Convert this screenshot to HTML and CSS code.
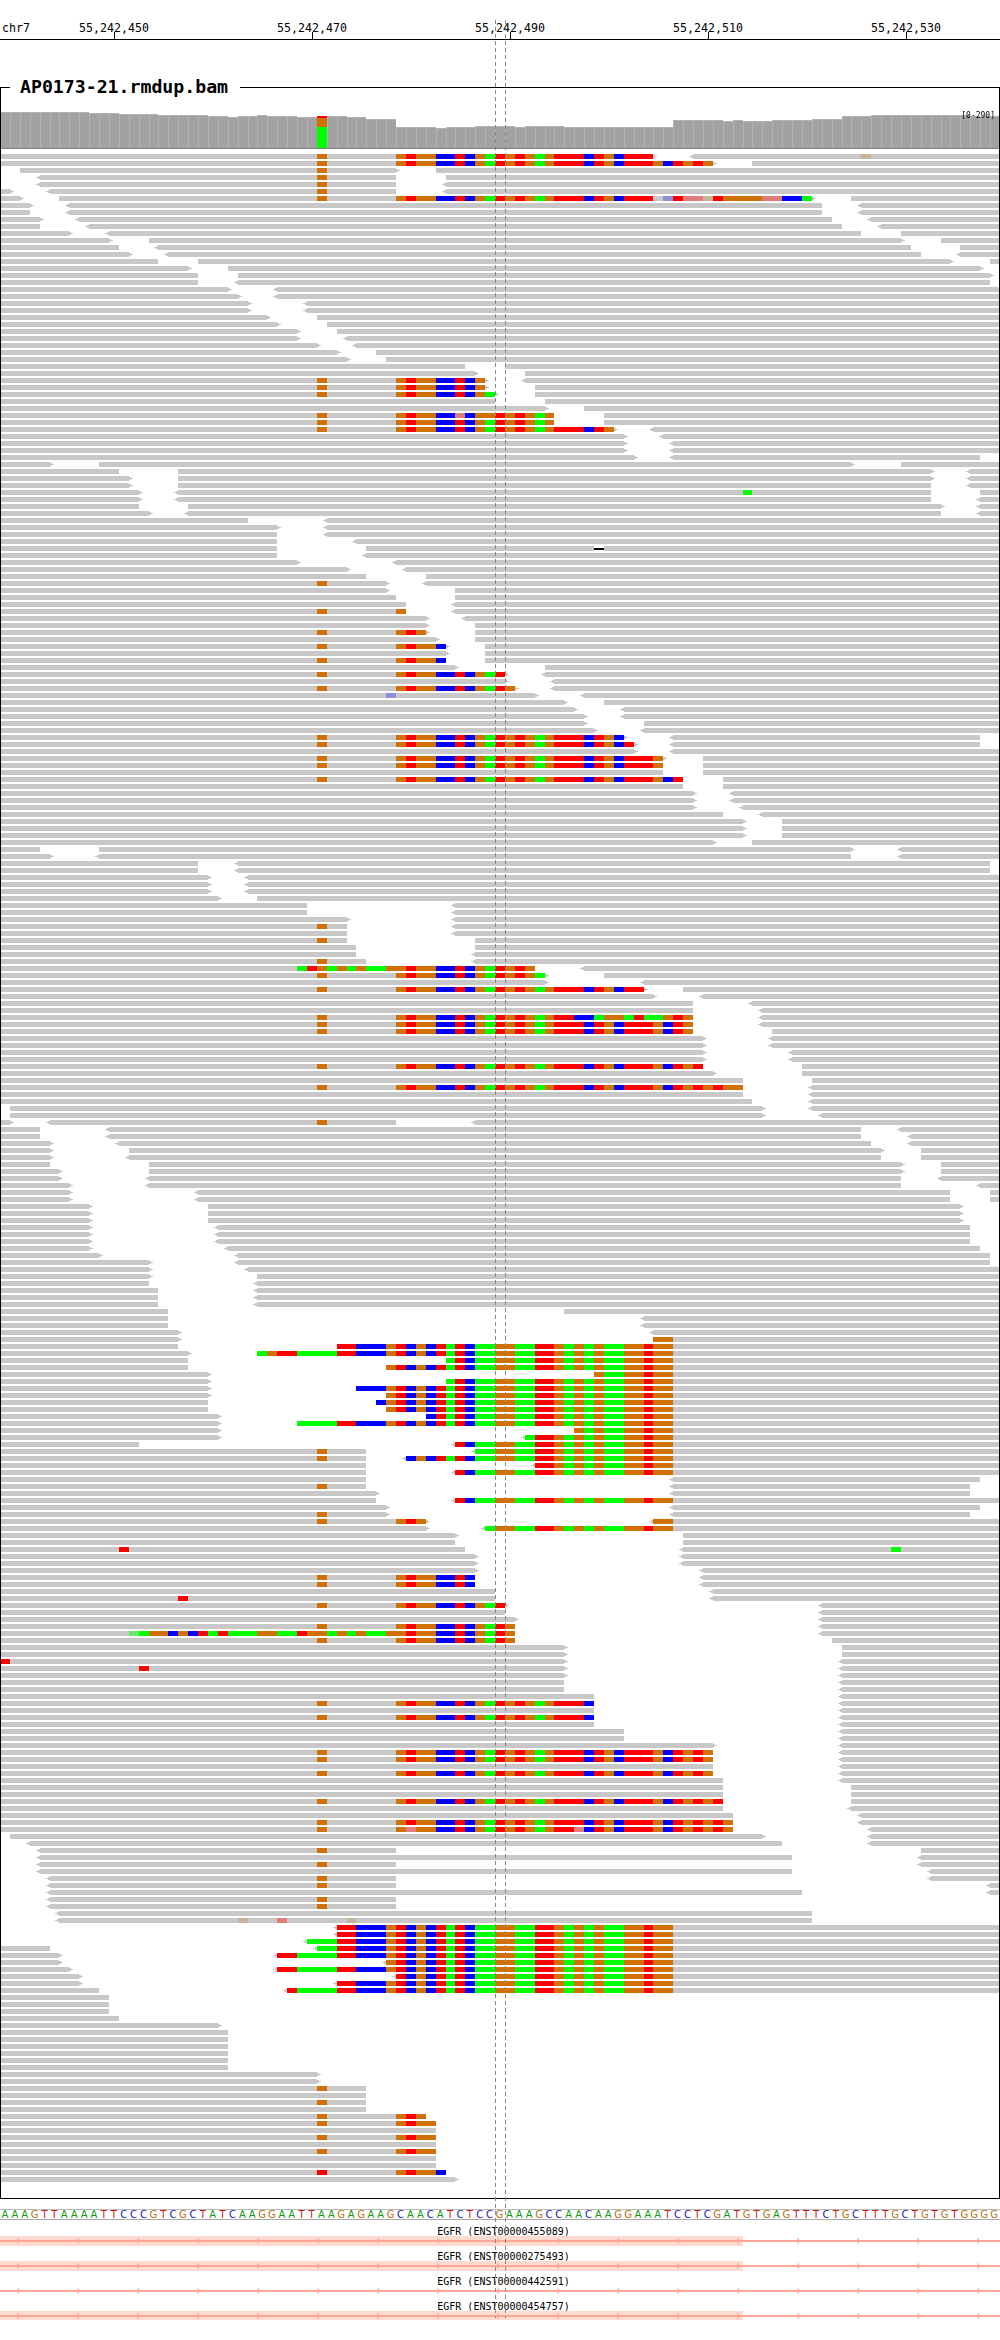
FILE: index.html
```html
<!DOCTYPE html>
<html lang="en">
<head>
  <meta charset="UTF-8">
  <title>AP0173-21.rmdup.bam</title>
  <meta name="viewport" content="width=device-width, initial-scale=1">
  <link rel="stylesheet" href="styles.css">
</head>
<body>
  <div class="ruler">
    <span class="chrom">chr7</span>
    <span class="tick">55,242,450</span>
    <span class="tick">55,242,470</span>
    <span class="tick">55,242,490</span>
    <span class="tick">55,242,510</span>
    <span class="tick">55,242,530</span>
  </div>
  <fieldset class="track">
    <legend>AP0173-21.rmdup.bam</legend>
    <span class="range">[0-290]</span>
    <canvas id="reads" width="998" height="2099"></canvas>
  </fieldset>
  <div class="sequence" id="sequence"></div>
  <div id="genes"></div>
  <div class="center-line left"></div>
  <div class="center-line right"></div>
  <script src="script.js"></script>
</body>
</html>
```

FILE: styles.css
```css
html, body {
  margin: 0;
  padding: 0;
  background: #fff;
}
body {
  position: relative;
  width: 1000px;
  height: 2340px;
  overflow: hidden;
  font-family: "DejaVu Sans Mono", monospace;
  color: #000;
}
.ruler {
  position: relative;
  display: flex;
  box-sizing: border-box;
  height: 40px;
  padding: 21px 0 0 15px;
  font-size: 11.6px;
  line-height: 14px;
  border-bottom: 1px solid #000;
  overflow: hidden;
}
.chrom {
  position: absolute;
  left: 2px;
  top: 21px;
}
.tick {
  position: relative;
  flex: 0 0 198px;
  text-align: center;
}
.tick::after {
  content: "";
  position: absolute;
  left: 99px;
  bottom: 0;
  width: 1px;
  height: 7px;
  background: #000;
}
.track {
  position: relative;
  box-sizing: border-box;
  width: 1000px;
  margin: 35px 0 0 0;
  padding: 0;
  border: 1px solid #000;
  min-width: 0;
}
.track legend {
  margin-left: 9px;
  padding: 0 12px 0 10px;
  font-size: 18.2px;
  font-weight: bold;
  line-height: 24px;
}
.track canvas {
  display: block;
}
.range {
  position: absolute;
  right: 4px;
  top: 12px;
  font-size: 8px;
  line-height: 10px;
}
.sequence {
  display: grid;
  grid-template-columns: repeat(101, 9.9px);
  box-sizing: border-box;
  height: 11px;
  margin-top: 10px;
  border-top: 1px solid #bbb;
  border-bottom: 1px solid #aaa;
  font-family: "DejaVu Sans", sans-serif;
  font-size: 10px;
  line-height: 9px;
  text-align: center;
}
.base-A { color: #109a10; }
.base-C { color: #2020b0; }
.base-G { color: #b87010; }
.base-T { color: #c81818; }
#genes {
  margin-top: 7px;
}
.gene {
  height: 25px;
}
.gene-label {
  font-size: 10px;
  line-height: 9px;
  text-align: center;
  padding-left: 7px;
}
.gene-track {
  display: block;
}
.center-line {
  position: absolute;
  top: 20px;
  width: 1px;
  height: 2298px;
  background: repeating-linear-gradient(to bottom, #888 0, #888 4px, transparent 4px, transparent 7px);
}
.center-line.left { left: 495px; }
.center-line.right { left: 505px; }
```

FILE: script.js
```js
const COLORS = {
  A: '#00ff00', C: '#0000ff', G: '#d17105', T: '#ff0000',
  p: '#e07c7c', n: '#c8b39b', l: '#8f8fdd', e: '#66e866'
};
const READ_GRAY = '#c8c8c8';

// the two soft-clipped consensus sequences, by column
const SEQ_A_START = 13;
const SEQ_A = 'AAGGCGCTATAAA' + 'GGAATGGAGAGAAG' + 'GTGGCCTCGATGTGAGTTTCTGCTTTGCTGTGTGG';
const SEQ_B_START = 26;
const SEQ_B = 'AGTTAAAATTCCCGTCGCTATCAAGGAATTGAGAGAAGGTGG';

const REFERENCE = 'AAAGTTAAAATTCCCGTCGCTATCAAGGAATTAAGAGAAGCAACATCTCCGAAAGCCAACAAGGAAATCCTCGATGTGAGTTTCTGCTTTGCTGTGTGGGG';

// top of each coverage bar: [columns, y]
const COVERAGE = [[9,112],[3,113],[4,114],[5,115],[2,116],[1,117],[2,116],[1,115],[3,116],[2,117],[3,116],[2,117],
  [3,119],[4,127],[1,128],[3,127],[4,126],[1,127],[4,126],[11,127],[5,120],[1,121],[1,120],[3,121],[4,120],[3,119],
  [3,116],[10,115],[3,116]];

// reads | mismatches. aN: col 32 + sequence A up to N, bN: sequence B from N
const ROWS = `0-66> <70-101|a66 n87
0-72> 76-101|a72
2-40> 44-101|G32
<4-40 45-101|G32
<4-40 <45-101|G32
0-1> <5-40 <45-101|G32
0-2> 6-82> 86-101|a66 l67 T68 p69 p70 n71 T72 G73 G74 G75 G76 p77 p78 C79 C80 A81
0-3> <7-83 <87-101
0-3 <7-83 <87-101
0-4> <8-84 <88-101
0-4 <9-85 <89-101
0-7> <11-87 91-101
0-11> 15-91> 95-101
0-12 <16-92 97-101
0-13> <17-93 <97-101
0-16 20-96> 100-101
0-19> 23-99>
0-20 24-100>
0-20 <24-100
0-23> <28-101
0-24> <28-101
0-25> <31-101
0-25> <31-101
0-27> 32-101
0-28> 33-101
0-30> 34-101
0-30> <35-101
0-32> <36-101
0-34> 38-101
0-35> 39-101
0-47 51-101
0-48> 53-101
0-49> <53-101|a49
0-49> 54-101|a49
0-50> 54-101|a50
0-50 55-101
0-55> 59-101
0-56 61-101|a56 p46 G49
0-56 61-101|a56
0-62> <66-101|a62
0-63> <67-101
0-63> <68-101
0-63> <68-101
0-64> <68-99
0-5> 10-86> 91-101
0-12 18-94> <98-101
0-13> 18-94> <98-101
0-13> 18-94 <98-101
0-14> <18-94 99-101|A75
0-14> <18-94 <99-101
0-14 19-95> <99-101
0-15> <19-95 <99-101
0-25 <33-101
0-28> <33-101
0-28 <33-101
0-28 <36-101
0-28 37-101|D60
0-28 <37-101
0-30> <40-101
0-35> <41-101
0-37 43-101
0-39> <43-101|G32
0-39> 46-101
0-40 46-101
0-41 <46-101
0-41 <46-101|G32 G40
0-43> <47-101
0-43> 48-101
0-43> 48-101|a43
0-44> 48-101
0-45> 49-101|a45
0-45> 49-101
0-45 49-101|a45
0-46> 55-101
0-51> <55-101|a51
0-51> <56-101
0-52> <56-101|a52
0-54> <59-101|l39
0-57> 61-101
0-58> <63-101
0-59> <63-101
0-59> 65-101
0-60> <65-101
0-63> <68-99|a63
0-64> <68-99|a64
0-64> <68-101
0-67> 71-101|a67
0-67 71-101|a67
0-67 71-101
0-69 73-101|a69
0-69 73-101
0-70> <74-101
0-70> <74-101
0-70> <75-101
0-73 <77-101
0-75> 79-101
0-75> 79-101
0-75> 79-101
0-72> 76-101
0-4 10-86> <91-101
0-5> <10-86 <91-101
0-20 <24-100
0-20 <24-100
0-21> <25-101
0-21> <25-101
0-21> <25-101
0-22> 26-101
0-31 <46-101
0-31 <46-101
0-35> <46-101
0-35 <46-101|G32
0-35 <46-101
0-35 48-101|G32
0-36 48-101
0-36 <48-101
0-37 <48-101|G32
0-54 <59-101|a54 s30-40 A30 T31
0-55> 61-101|a55
0-55> <65-101
0-65> 69-101|a65
0-66> <71-101
0-70 <76-101
0-70 <77-101
0-70 <77-101|a56 T56 T57 C58 C59 A60 G61 G62 A63 T64 A65 A66 G67 T68 G69
0-70 <77-101|a70
0-70 78-101|a70
0-71> <78-101
0-71> <78-101
0-71> <80-101
0-71> <80-101
0-71 81-101|a71
0-72> 81-101
0-75 82-101
0-75 <82-101|a75
0-75 <82-101
0-76 <82-101
1-77> <82-101
1-77> <83-101
0-1> <5-40 <48-101|G32
0-4 <11-87 <91-101
0-4 <11-87 <92-101
0-5> <12-88 <92-101
0-5> 13-89> 93-101
0-5> <13-89 93-101
0-5 15-91> 95-101
0-6> 15-91> 95-101
0-6> <15-91 <95-101
0-7> <15-91 <99-101
0-7> <20-96 100-101
0-7> <20-96 100-101
0-9> 21-97>
0-9> 21-97>
0-9> 21-97>
0-9> <22-98
0-9> <22-98
0-9> <22-98
0-9> <23-99
0-10> <24-100
0-15> <24-100
0-15> <25-101
0-15> 26-101
0-15 <26-101
0-16 <26-101
0-16 <26-101
0-16 <26-101
0-17 57-101
0-17 <65-101
0-17 <65-101
0-18> <66-101
0-18> 66-101|b66
0-18 34-101|b34
0-19> 26-101|b26
0-19 45-101|b45
0-19 39-101|b39
0-21> 60-101|b60
0-21> 45-101|b45
0-21> 36-101|b36
0-21> 39-101|b39
0-21 38-101|b38
0-21 39-101|b39
0-22> 43-101|b43
0-22> 30-101|b30
0-22> 58-101|b58
0-22> <53-101|b53
0-14 <46-101|b46
0-37 <48-101|G32 b48
0-37 <41-101|G32 b41
0-37 <54-101|b54
0-37 <46-101|b46
0-37 <68-99
0-37 <68-98|G32
0-38> <68-98
0-38 <46-101|b46
0-39> <68-99
0-39> <68-98|G32
0-43> <66-101|a43 b66
0-43> <49-101|b49
0-46> 69-101
0-46 69-101
0-47 <69-101|T12 A90
0-48> <69-101
0-48> <69-101
0-48> <71-101
0-48 <71-101|a48
0-48 <71-101|a48
0-50 <72-101
0-50 <72-101|T18
0-51> <83-101|a51
0-51 <83-101
0-52> <83-101
0-52 <83-101|a52
0-52 <83-101|a52 s13-40 e13
0-52 84-101|a52
0-57> 85-101
0-57> 85-101
0-57> <85-101|T0
0-57> <85-101|T14
0-57> <85-101
0-57 <85-101
0-57 <85-101
0-60 <85-101
0-60 <85-101|a60
0-60 <85-101
0-60 <85-101|a60
0-60 <85-101
0-63 <85-101
0-63 <85-101
0-72> <85-101
0-72 <85-101|a72
0-72 <85-101|a72
0-72 <85-101
0-72 <85-101|a72
0-73 <85-101
0-73 86-101
0-73 86-101
0-73 86-101|a73
0-73 <86-101
0-74 <87-101
0-74 <87-101|a74
0-74 <88-101|a74 p41 p58
1-77> <88-101
<3-79 <88-101
<4-40 93-101|G32
<4-80 <93-101
<4-40 <93-101|G32
<4-80 <94-101
<5-40 <94-101|G32
<5-40 <100-101|G32
<5-81 <100-101
<5-40|G32
<5-40|G32
<6-82
<6-82|n24 p28 n35
<34-101|b34
<34-101|b34
<31-101|b31
0-5 <32-101|b32
0-6> <28-101|b28
0-6> <39-101|b39
0-7> <28-101|b28
0-8> <40-101|b40
0-8> <34-101|b34
0-10 <29-101|b29
0-11
0-11
0-11
0-12
0-22>
0-23
0-23
0-23
0-23
0-23
0-23
0-32>
0-32>
0-37|G32
0-37
0-37|G32
0-37
0-43|a43
0-44|a44
0-44
0-44|a44
0-44
0-44|a44
0-44
0-44
0-45|a45 T32
0-46>`.split('\n');

const colX = k => Math.round(9.9 * k);

const canvas = document.getElementById('reads');
const ctx = canvas.getContext('2d');
const box = canvas.getBoundingClientRect();

function rect(x, y, w, h, color) {
  ctx.fillStyle = color;
  ctx.fillRect(x - box.left, y - box.top, w, h);
}

function column(k, y, h, color) {
  rect(colX(k), y, colX(k + 1) - colX(k), h, color);
}

function drawCoverage() {
  let k = 0;
  COVERAGE.forEach(([n, top]) => {
    for (let i = 0; i < n; i++, k++) {
      if (k === 32) continue;
      column(k, top, 148 - top, '#b2b2b2');
      rect(colX(k) + 1, top + 1, colX(k + 1) - colX(k) - 1, 147 - top, '#a2a2a2');
    }
  });
  column(32, 116, 2, COLORS.T);
  column(32, 118, 9, COLORS.G);
  column(32, 127, 21, COLORS.A);
  rect(0, 148, 1000, 1, '#808080');
}

function paintToken(token, y) {
  const kind = token[0];
  const rest = token.slice(1);
  if (kind === 'a') {
    column(32, y, 5, COLORS.G);
    for (let k = 40; k < +rest; k++) column(k, y, 5, COLORS[SEQ_A[k - SEQ_A_START]]);
  } else if (kind === 'b') {
    for (let k = +rest; k < 68; k++) column(k, y, 5, COLORS[SEQ_B[k - SEQ_B_START]]);
  } else if (kind === 's') {
    const [from, to] = rest.split('-').map(Number);
    for (let k = from; k < to; k++) column(k, y, 5, COLORS[SEQ_A[k - SEQ_A_START]]);
  } else if (kind === 'D') {
    column(+rest, y, 5, '#fff');
    column(+rest, y + 2, 2, '#000');
  } else {
    column(+rest, y, 5, COLORS[kind]);
  }
}

function drawRow(line, i) {
  const y = 154 + 7 * i;
  const [reads, paints] = line.split('|');
  reads.split(' ').forEach(read => {
    const m = read.match(/(<?)(\d+)-(\d+)(>?)/);
    const x1 = colX(+m[2]);
    const x2 = colX(+m[3]);
    rect(x1, y, x2 - x1, 5, READ_GRAY);
    if (m[1]) {
      rect(x1 - 2, y + 1, 2, 3, READ_GRAY);
      rect(x1 - 4, y + 2, 2, 1, READ_GRAY);
    }
    if (m[4]) {
      rect(x2, y + 1, 2, 3, READ_GRAY);
      rect(x2 + 2, y + 2, 2, 1, READ_GRAY);
    }
  });
  if (paints) paints.split(' ').forEach(token => paintToken(token, y));
}

drawCoverage();
ROWS.forEach(drawRow);

document.getElementById('sequence').innerHTML = REFERENCE.split('')
  .map(base => `<span class="base-${base}">${base}</span>`).join('');

const GENES = [
  { name: 'EGFR (ENST00000455089)', band: 10 },
  { name: 'EGFR (ENST00000275493)', band: 10 },
  { name: 'EGFR (ENST00000442591)', band: 0 },
  { name: 'EGFR (ENST00000454757)', band: 9 }
];

function geneSvg(gene) {
  let arrows = '';
  for (let x = 17.5; x < 1000; x += 60) {
    arrows += `M${x} 1.5L${x + 3} 5L${x} 8.5Z`;
  }
  const band = gene.band ? `<rect width="743" height="${gene.band}" fill="#ffdccf"/>` : '';
  return `<svg class="gene-track" width="1000" height="10">${band}` +
    `<rect y="4" width="1000" height="2" fill="#ffa698"/><path d="${arrows}" fill="#ffa698"/></svg>`;
}

const genes = document.getElementById('genes');
GENES.forEach(gene => {
  const row = document.createElement('div');
  row.className = 'gene';
  row.innerHTML = `<div class="gene-label">${gene.name}</div>${geneSvg(gene)}`;
  genes.appendChild(row);
});
```
